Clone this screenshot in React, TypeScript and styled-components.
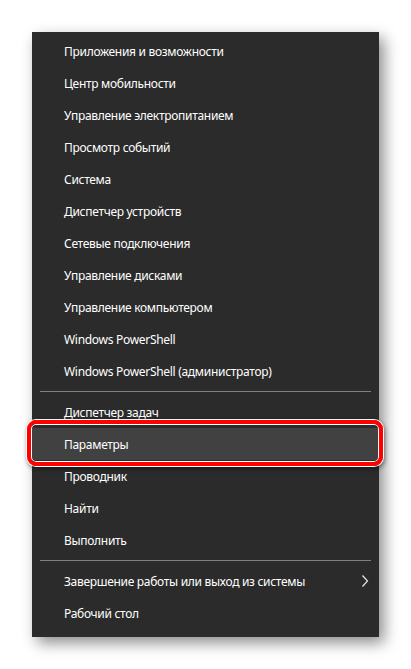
import React from "react";
import styled, { createGlobalStyle } from "styled-components";

const Global = createGlobalStyle`
  html, body { margin: 0; padding: 0; background: #ffffff; }
  body { font-family: "Segoe UI", "Noto Sans", "Open Sans", sans-serif; }
`;

const Page = styled.div`
  width: 411px;
  height: 669px;
  padding: 32px 0 0 32px;
  box-sizing: border-box;
`;

const Menu = styled.div`
  width: 347px;
  height: 605px;
  box-sizing: border-box;
  background: #2b2b2b;
  padding: 3px 0 8px;
  box-shadow: 5px 6px 14px rgba(0, 0, 0, 0.45);
  display: flex;
  flex-direction: column;
`;

const Item = styled.div<{ $active?: boolean }>`
  position: relative;
  height: 32px;
  display: flex;
  align-items: center;
  padding-left: 32px;
  padding-right: 10px;
  font-size: 12px;
  letter-spacing: -0.3px;
  color: #ffffff;
  background: ${(p) => (p.$active ? "#414141" : "transparent")};
`;

const Label = styled.span`
  flex: 1;
  white-space: nowrap;
`;

const Separator = styled.div`
  height: 9px;
  display: flex;
  align-items: center;
  padding: 0 8px;
  &::after {
    content: "";
    flex: 1;
    height: 1px;
    background: #808080;
  }
`;

const Ring = styled.div`
  position: absolute;
  left: -5px;
  right: -4px;
  top: -8px;
  bottom: -6px;
  border: 4px solid #ff0000;
  border-radius: 9px;
  box-shadow: 0 0 0 1px #ffffff, inset 0 0 0 1px #ffffff, 1px 2px 4px 1px rgba(0,0,0,0.45);
  pointer-events: none;
`;

const Chevron = () => (
  <svg width="8" height="14" viewBox="0 0 8 14">
    <polyline points="1.5,1.5 6.5,7 1.5,12.5" fill="none" stroke="#e8e8e8" strokeWidth="1.2" />
  </svg>
);

const group1 = [
  "Приложения и возможности",
  "Центр мобильности",
  "Управление электропитанием",
  "Просмотр событий",
  "Система",
  "Диспетчер устройств",
  "Сетевые подключения",
  "Управление дисками",
  "Управление компьютером",
  "Windows PowerShell",
  "Windows PowerShell (администратор)",
];

const group2 = ["Диспетчер задач", "Параметры", "Проводник", "Найти", "Выполнить"];

export default function App() {
  return (
    <>
      <Global />
      <Page>
        <Menu>
          {group1.map((t) => (
            <Item key={t}>
              <Label>{t}</Label>
            </Item>
          ))}
          <Separator />
          {group2.map((t) => (
            <Item key={t} $active={t === "Параметры"}>
              <Label>{t}</Label>
              {t === "Параметры" && <Ring />}
            </Item>
          ))}
          <Separator />
          <Item>
            <Label>Завершение работы или выход из системы</Label>
            <Chevron />
          </Item>
          <Item>
            <Label>Рабочий стол</Label>
          </Item>
        </Menu>
      </Page>
    </>
  );
}
